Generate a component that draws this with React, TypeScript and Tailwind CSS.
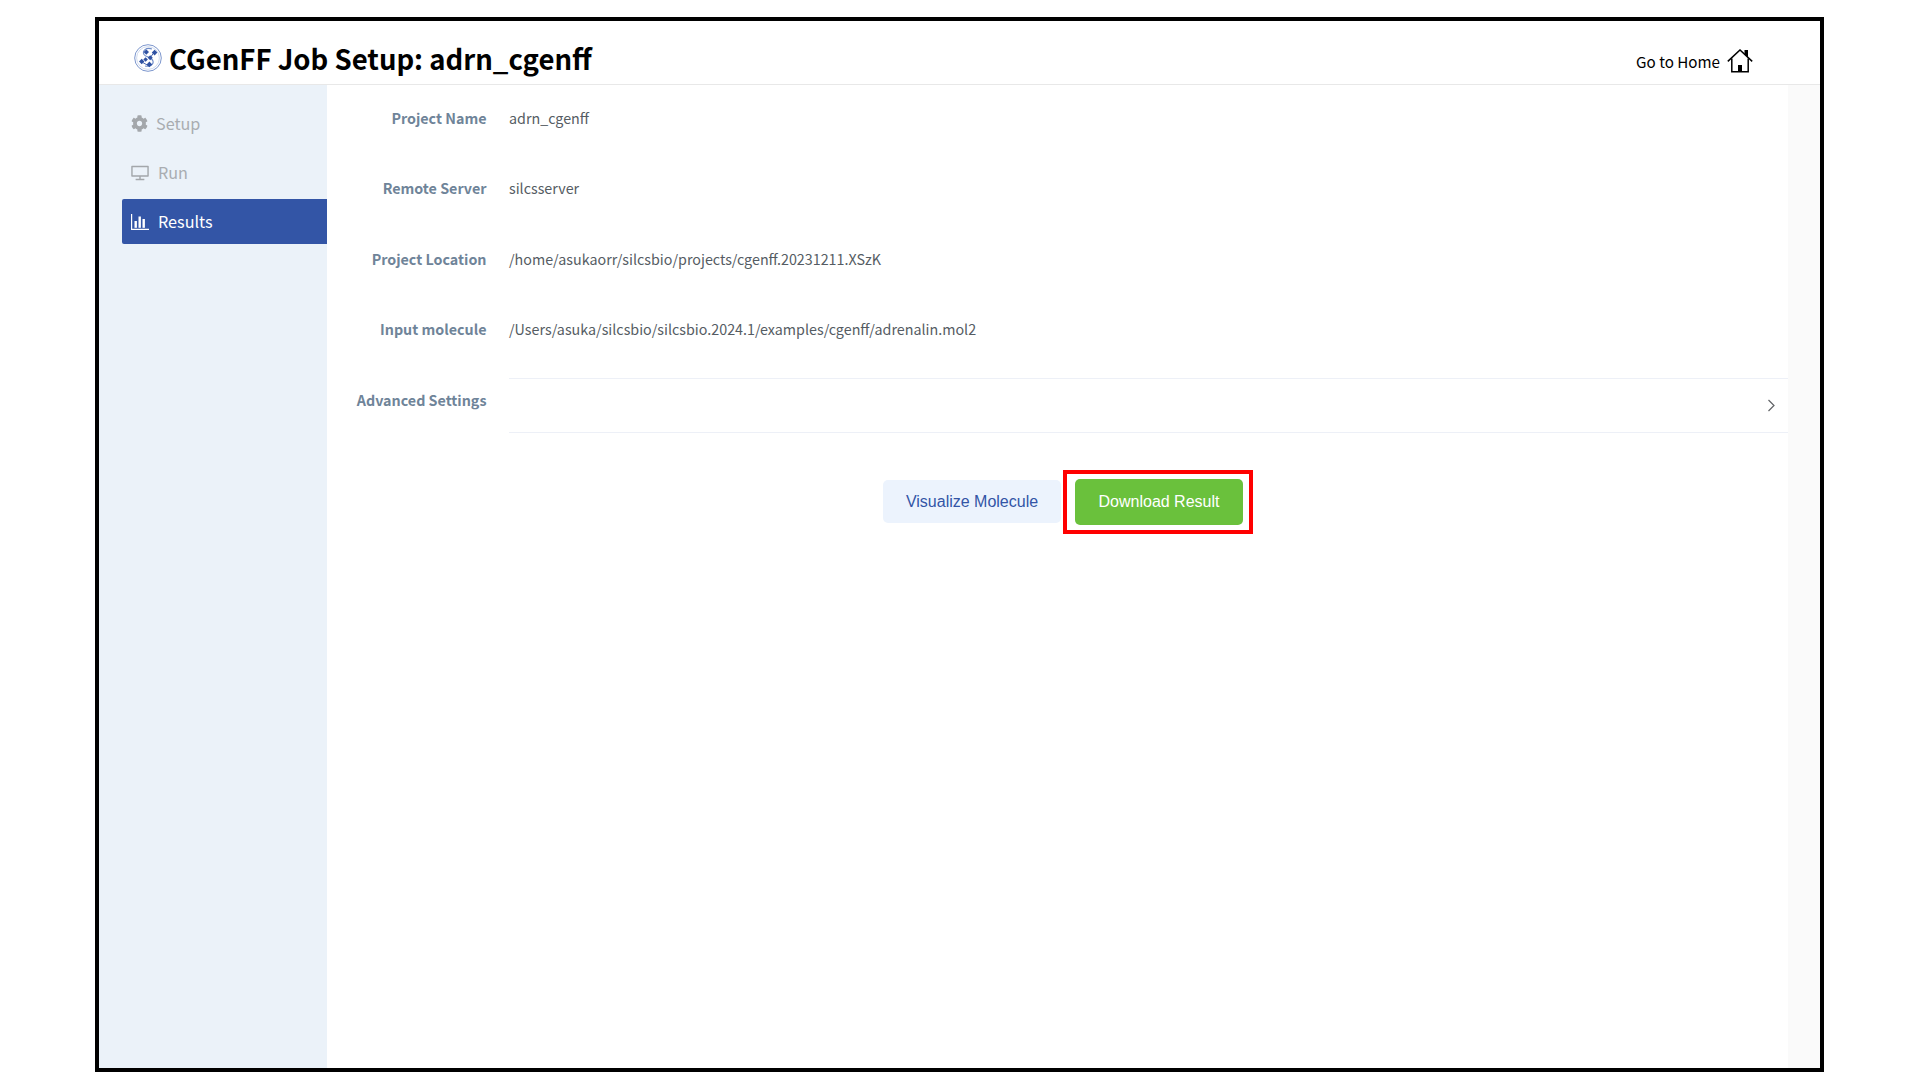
import { FaCog } from "react-icons/fa";
import { AiOutlineDesktop } from "react-icons/ai";

const font = "[font-family:'Noto_Sans_CJK_JP','Source_Sans_Pro',sans-serif]";

function Logo() {
  return (
    <svg width="28" height="28" viewBox="0 0 28 28" className="shrink-0">
      <circle cx="14" cy="14" r="13.3" fill="none" stroke="#7c96cd" strokeWidth="1" />
      <circle cx="14" cy="14" r="11.4" fill="none" stroke="#c5d2ea" strokeWidth="0.8" />
      <path d="M18 5C12 3 8 7 10 10.5c2 3 8 2.5 9 6.5 1 3.5-3 6-8 5" fill="none" stroke="#6f8cc8" strokeWidth="1.1" />
      <path d="M21 7l-5 7M7 17.5l8 4.5" fill="none" stroke="#3355a6" strokeWidth="0.9" />
      <g fill="#2f52a3">
        <rect x="10.4" y="6.2" width="3.8" height="3.8" transform="rotate(45 12.3 8.1)" />
        <rect x="18.6" y="6.6" width="4" height="4" transform="rotate(45 20.6 8.6)" />
        <rect x="14.4" y="12" width="3.6" height="3.6" transform="rotate(45 16.2 13.8)" />
        <rect x="5.8" y="15.6" width="3.8" height="3.8" transform="rotate(45 7.7 17.5)" />
        <rect x="10" y="13.8" width="3.2" height="3.2" transform="rotate(45 11.6 15.4)" />
        <rect x="13.4" y="18.4" width="4" height="4" transform="rotate(45 15.4 20.4)" />
      </g>
    </svg>
  );
}

function HomeIcon() {
  return (
    <svg width="26" height="24" viewBox="0 0 26 24" className="shrink-0">
      <path d="M0.8 12.4 13 1 25.2 12.4" fill="none" stroke="#000" strokeWidth="1.5" />
      <path d="M4.8 9.5v13.2h16.4V9.5" fill="none" stroke="#000" strokeWidth="1.5" />
      <rect x="11" y="16" width="4" height="7" fill="#000" />
      <path d="M17.5 1h3.5v7.5l-3.5-3.3z" fill="#000" />
    </svg>
  );
}

function BarsIcon() {
  return (
    <svg width="18" height="16" viewBox="0 0 18 16" className="shrink-0">
      <path d="M0.6 0v15.4H18" fill="none" stroke="#fff" strokeWidth="1.2" />
      <rect x="3.5" y="7" width="2.4" height="6.8" fill="#fff" />
      <rect x="7.5" y="2.5" width="2.4" height="11.3" fill="#fff" />
      <rect x="11.5" y="5" width="2.4" height="8.8" fill="#fff" />
    </svg>
  );
}

function Row({ label, value }: { label: string; value: string }) {
  return (
    <div className="flex h-[70.6px] pt-[21.5px] gap-[23px] leading-[22px] text-[14.3px]">
      <div className="w-[159.5px] shrink-0 text-right font-bold text-[#6f8499]">{label}</div>
      <div className="-ml-[0.5px] text-[#555c63]">{value}</div>
    </div>
  );
}

export default function App() {
  return (
    <div className={`w-[1920px] h-[1080px] bg-white pt-[17px] pl-[95px] ${font}`}>
      <div className="relative w-[1729px] h-[1055px] border-4 border-black flex flex-col bg-white">
        <header className="h-[64px] shrink-0 flex items-center border-b border-[#e8e8e8] pt-[11px] pl-[35px] pr-[67px]">
          <Logo />
          <h1 className="ml-[7px] text-[27.5px] leading-[36px] font-bold text-black">CGenFF Job Setup: adrn_cgenff</h1>
          <div className="ml-auto mt-[5px] flex items-center gap-[7px] text-[15.2px] leading-[24px] text-black">
            <span>Go to Home</span>
            <HomeIcon />
          </div>
        </header>
        <div className="flex-1 flex min-h-0">
          <aside className="w-[228px] shrink-0 bg-[#ebf2f9] pt-[16px] pl-[23px] flex flex-col gap-[4px] text-[16.2px]">
            <div className="h-[45px] flex items-center pl-[9px] gap-[8px] text-[#a9adb1]">
              <FaCog className="text-[17px] text-[#a3a7ab]" />
              <span>Setup</span>
            </div>
            <div className="h-[45px] flex items-center pl-[8px] gap-[8px] text-[#a9adb1]">
              <AiOutlineDesktop className="text-[20px] text-[#a3a7ab]" />
              <span>Run</span>
            </div>
            <div className="h-[45px] flex items-center pl-[9px] gap-[9px] text-white bg-[#3355a6] rounded-l-[2px]">
              <BarsIcon />
              <span>Results</span>
            </div>
          </aside>
          <main className="flex-1 min-w-0">
            <Row label="Project Name" value="adrn_cgenff" />
            <Row label="Remote Server" value="silcsserver" />
            <Row label="Project Location" value="/home/asukaorr/silcsbio/projects/cgenff.20231211.XSzK" />
            <Row label="Input molecule" value="/Users/asuka/silcsbio/silcsbio.2024.1/examples/cgenff/adrenalin.mol2" />
            <div className="flex gap-[23px] pt-[11px] text-[14.3px] leading-[22px]">
              <div className="w-[159.5px] shrink-0 pt-[11px] text-right font-bold text-[#6f8499]">Advanced Settings</div>
              <div className="-ml-[0.5px] flex-1 h-[55px] border-y border-[#edf0f7] flex items-center justify-end pr-[12px]">
                <svg width="9" height="13" viewBox="0 0 9 13">
                  <path d="M1.5 1 7 6.5 1.5 12" fill="none" stroke="#606266" strokeWidth="1.2" />
                </svg>
              </div>
            </div>
            <div className="relative mt-[46px] ml-[556px] flex items-start gap-[14px] font-['Liberation_Sans',sans-serif] text-[16px]">
              <button className="mt-[1px] w-[178px] h-[43px] rounded-[5px] bg-[#ecf3fd] text-[#3355a6]">Visualize Molecule</button>
              <button className="w-[168px] h-[46px] rounded-[5px] bg-[#6ac13c] text-white">Download Result</button>
              <div className="absolute left-[180px] top-[-9px] w-[190px] h-[64px] border-4 border-[#ff0000]" />
            </div>
          </main>
          <div className="w-[32px] shrink-0 bg-[#fafafa]" />
        </div>
      </div>
    </div>
  );
}
